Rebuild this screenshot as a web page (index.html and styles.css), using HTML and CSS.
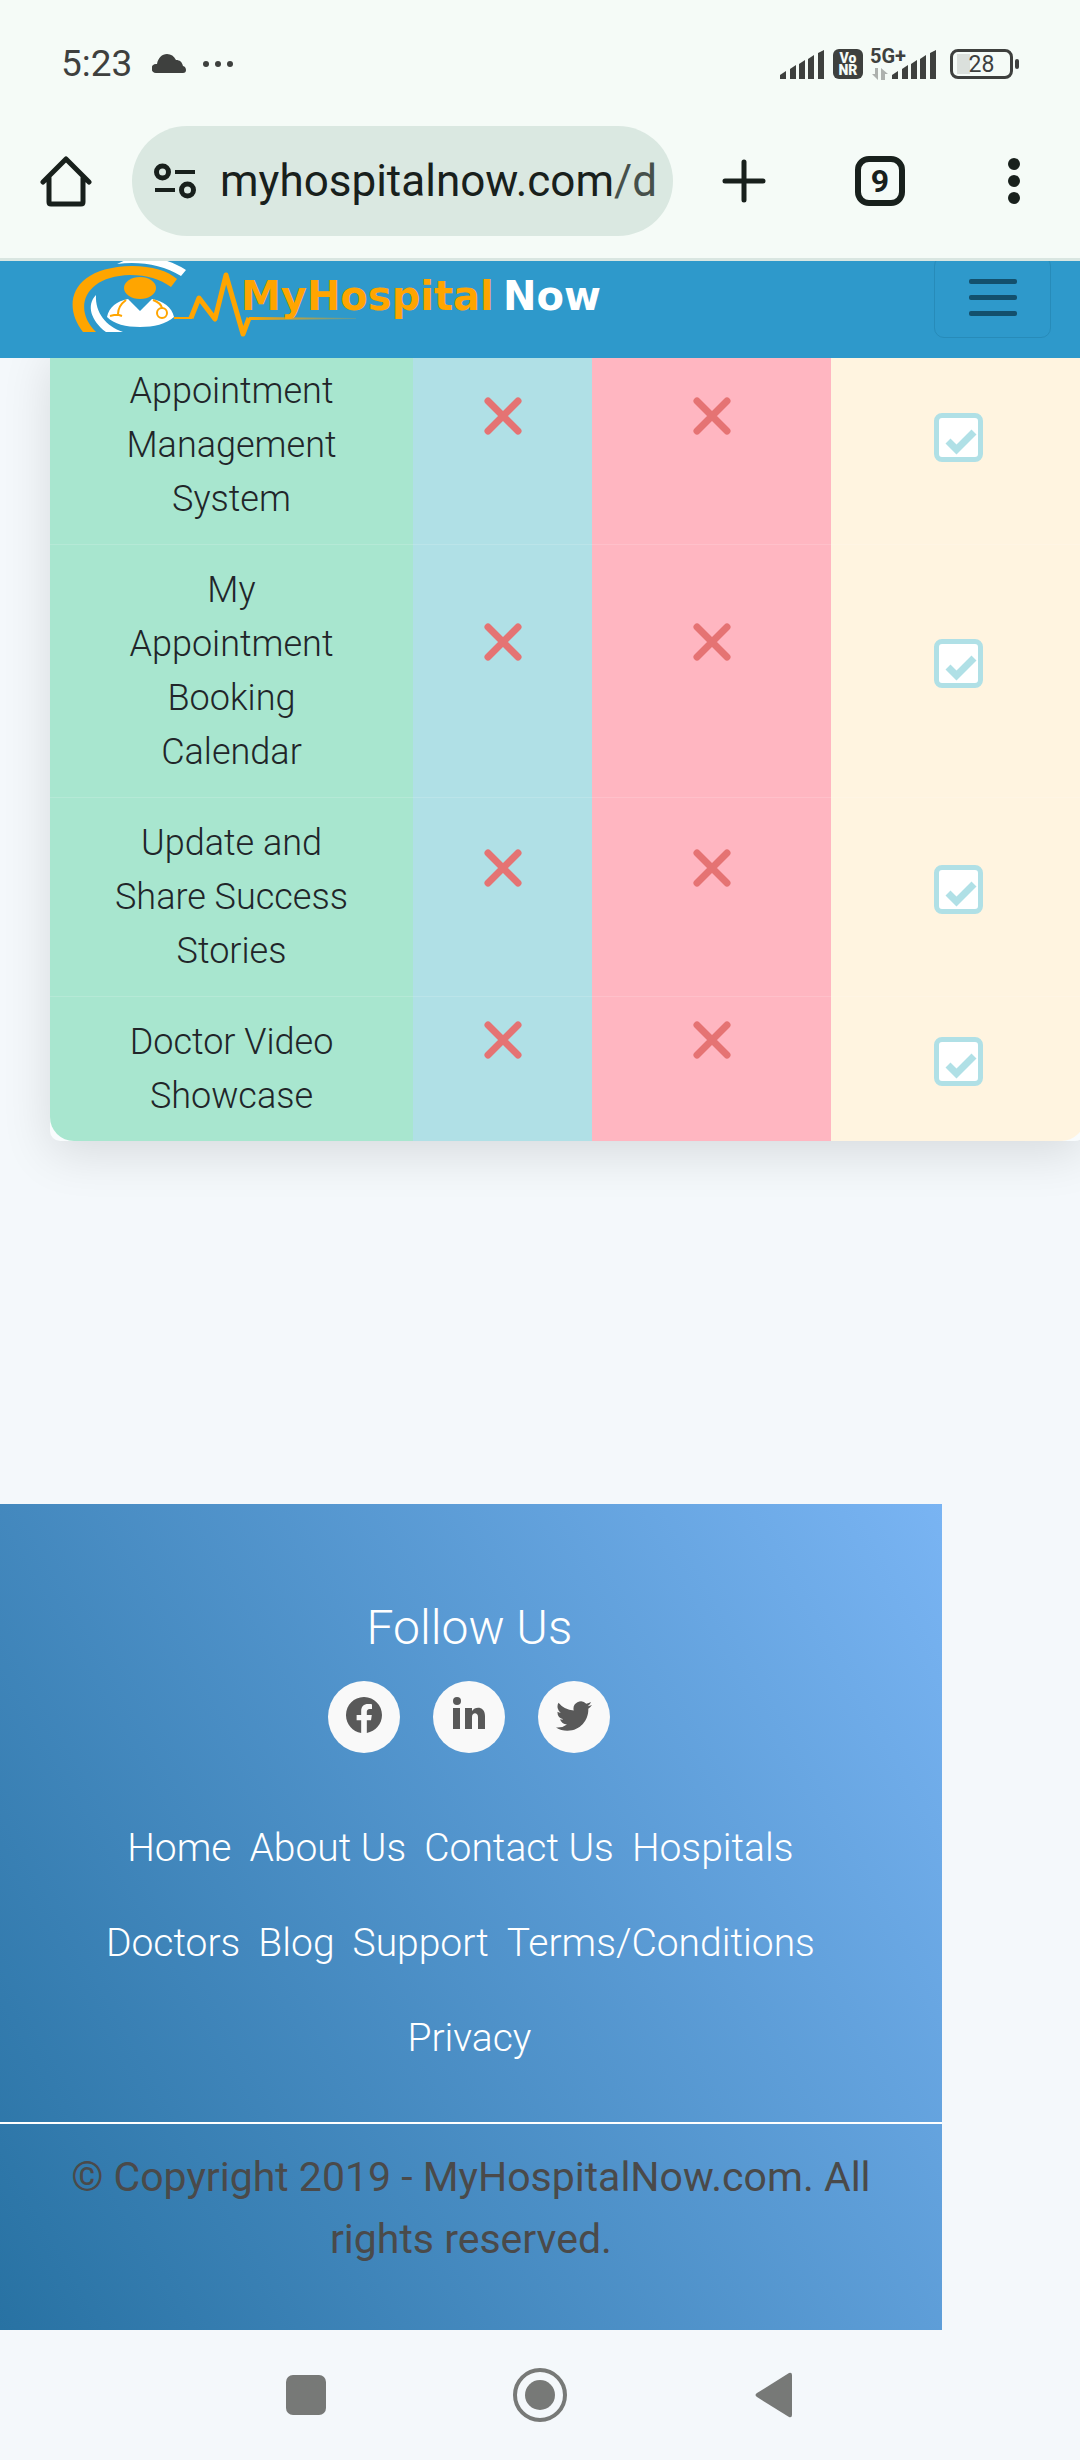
FILE: index.html
```html
<!DOCTYPE html>
<html lang="en">
<head>
  <meta charset="UTF-8">
  <meta name="viewport" content="width=device-width, initial-scale=1">
  <title>MyHospital Now</title>
  <link rel="stylesheet" href="styles.css">
</head>
<body>
  <header class="browser">
    <div class="status-bar">
      <span class="time">5:23</span>
      <svg class="cloud" width="34" height="20" viewBox="0 0 34 20"><path d="M4 19a4 4 0 0 1 0-9h1C6 4 10 0 15 0c4 0 7 2 9 6 4 0 6 2 7 6 4 1 4 7 0 7z" fill="#3e403e"/></svg>
      <svg width="32" height="8" viewBox="0 0 32 8" fill="#3e403e"><circle cx="4" cy="4" r="3"/><circle cx="16" cy="4" r="3"/><circle cx="28" cy="4" r="3"/></svg>

      <div class="status-right">
        <svg width="44" height="29" viewBox="0 0 44 29" fill="#3e403e"><path d="M0 29v-4l6-4v8zM10 29V19l6-4v14zM19 29V14l6-4v19zM28 29V9l6-4v24zM38 29V3l6-3v29z"/></svg>
        <div class="vonr"><span>Vo</span><span>NR</span></div>
        <div class="network">
          <span>5G+</span>
          <svg width="16" height="12" viewBox="0 0 16 12" fill="#adb1ae"><path d="M3 0h3v12L0 6h3zM10 12h-1V0l7 6h-3v6z"/></svg>
        </div>
        <svg class="signal-two" width="44" height="29" viewBox="0 0 44 29" fill="#3e403e"><path d="M0 29v-4l6-4v8zM10 29V19l6-4v14zM19 29V14l6-4v19zM28 29V9l6-4v24zM38 29V3l6-3v29z"/></svg>
        <div class="battery"><span>28</span></div>
      </div>
    </div>

    <div class="toolbar">
      <button class="home" aria-label="Home">
        <svg width="52" height="52" viewBox="0 0 52 52" fill="none" stroke="#18201c" stroke-width="5" stroke-linejoin="round" stroke-linecap="round"><path d="M3 27L26 4l23 23M9 22v25q0 2 2 2h30q2 0 2-2V22"/></svg>
      </button>
      <button class="address">
        <svg width="42" height="36" viewBox="0 0 42 36" fill="none" stroke="#18201c" stroke-width="5"><circle cx="8.500" cy="9" r="6"/><circle cx="33.500" cy="27" r="6"/><path d="M21 9h20M1 27h20" stroke-width="4"/></svg>
        <span class="url">myhospitalnow.com<span class="path">/d</span></span>
      </button>
      <button class="new-tab" aria-label="New tab">
        <svg width="44" height="44" viewBox="0 0 44 44" stroke="#18201c" stroke-width="5" stroke-linecap="round"><path d="M22 3v38M3 22h38"/></svg>
      </button>
      <button class="tabs" aria-label="Open tabs"><span>9</span></button>
      <button class="more" aria-label="More">
        <svg width="12" height="46" viewBox="0 0 12 46" fill="#18201c"><circle cx="6" cy="6" r="6"/><circle cx="6" cy="23" r="6"/><circle cx="6" cy="40" r="6"/></svg>
      </button>
    </div>
  </header>

  <nav class="navbar">
    <a href="#" class="logo" aria-label="MyHospital Now">
      <svg width="540" height="97" viewBox="71 261 540 97">
        <defs>
          <linearGradient id="fade" gradientUnits="userSpaceOnUse" x1="249" y1="0" x2="356" y2="0">
            <stop offset="0" stop-color="#ffa500"/>
            <stop offset="1" stop-color="#ffa500" stop-opacity="0.2"/>
          </linearGradient>
        </defs>
        <path d="M83 332C62 306 70 267 132 266c20 0 36 5 45 13l-6 8c-11-8-24-12-41-12-45 1-58 33-34 57z" fill="#ffa500"/>
        <path d="M117 264c23-3 46 1 64 12l5-6c-9-6-20-10-30-12h-26z" fill="#fff"/>
        <path d="M96 295c-10 10-5 26 10 37h17c-17-6-28-19-27-37z" fill="#fff"/>
        <path d="M107 317c2-10 10-16 21-18l12 12 12-12c11 2 20 8 22 18-8 7-20 10-34 10s-26-3-33-10z" fill="#fff"/>
        <ellipse cx="140" cy="288" rx="16" ry="11" fill="#ffa500"/>
        <g fill="none" stroke="#ffa500" stroke-width="2">
          <path d="M126 300q-8 6-8 14M110 316l4-1h5l3 1M153 300q8 3 9 8"/>
          <circle cx="162" cy="313" r="5"/>
          <path d="M174 318h18"/>
        </g>
        <path d="M191 318l8-20 16 21 11-44 17 59 6-16" fill="none" stroke="#ffa500" stroke-width="5" stroke-linejoin="round"/>
        <path d="M249 317l107 1v1l-107 1z" fill="url(#fade)"/>
        <text x="241" y="310" class="logo-text" fill="#ffa500">MyHospital</text>
        <text x="503" y="310" class="logo-text" fill="#fff">Now</text>
      </svg>
    </a>
    <button class="toggler" aria-label="Toggle navigation">
      <span></span><span></span><span></span>
    </button>
  </nav>

  <main>
    <div class="table-wrap">
      <table>
        <colgroup><col class="col-feature"><col class="col-free"><col class="col-basic"><col></colgroup>
        <tbody>
          <tr>
            <td>Appointment Management System</td>
            <td class="no"><svg viewBox="0 0 38 38"><path d="M4 4l30 30M34 4L4 34"/></svg></td>
            <td class="no"><svg viewBox="0 0 38 38"><path d="M4 4l30 30M34 4L4 34"/></svg></td>
            <td class="yes"><input type="checkbox" checked aria-label="Appointment Management System"></td>
          </tr>
          <tr>
            <td>My Appointment Booking Calendar</td>
            <td class="no"><svg viewBox="0 0 38 38"><path d="M4 4l30 30M34 4L4 34"/></svg></td>
            <td class="no"><svg viewBox="0 0 38 38"><path d="M4 4l30 30M34 4L4 34"/></svg></td>
            <td class="yes"><input type="checkbox" checked aria-label="My Appointment Booking Calendar"></td>
          </tr>
          <tr>
            <td>Update and Share Success Stories</td>
            <td class="no"><svg viewBox="0 0 38 38"><path d="M4 4l30 30M34 4L4 34"/></svg></td>
            <td class="no"><svg viewBox="0 0 38 38"><path d="M4 4l30 30M34 4L4 34"/></svg></td>
            <td class="yes"><input type="checkbox" checked aria-label="Update and Share Success Stories"></td>
          </tr>
          <tr>
            <td>Doctor Video Showcase</td>
            <td class="no"><svg viewBox="0 0 38 38"><path d="M4 4l30 30M34 4L4 34"/></svg></td>
            <td class="no"><svg viewBox="0 0 38 38"><path d="M4 4l30 30M34 4L4 34"/></svg></td>
            <td class="yes"><input type="checkbox" checked aria-label="Doctor Video Showcase"></td>
          </tr>
        </tbody>
      </table>
    </div>
  </main>

  <footer class="footer">
    <h2>Follow Us</h2>
    <div class="social">
      <a href="#" aria-label="Facebook">
        <svg width="36" height="36" viewBox="0 0 16 16"><path d="M16 8.049c0-4.446-3.582-8.050-8-8.050C3.580 0-.002 3.603-.002 8.050c0 4.017 2.926 7.347 6.750 7.951v-5.625h-2.030V8.050H6.750V6.275c0-2.017 1.195-3.131 3.022-3.131.876 0 1.791.157 1.791.157v1.980h-1.009c-.993 0-1.303.621-1.303 1.258v1.510h2.218l-.354 2.326H9.250V16c3.824-.604 6.750-3.934 6.750-7.951"/></svg>
      </a>
      <a href="#" aria-label="LinkedIn">
        <svg width="34" height="34" viewBox="0 0 34 34"><circle cx="5" cy="4" r="4"/><path d="M1 11h7v21H1zM13 11h7v3c3-5 13-5 13 5v13h-7V20c0-5-6-5-6 0v12h-7z"/></svg>
      </a>
      <a href="#" aria-label="Twitter">
        <svg width="36" height="36" viewBox="0 0 16 16"><path d="M5.026 15c6.038 0 9.341-5.003 9.341-9.334q.002-.211-.006-.422A6.700 6.700 0 0 0 16 3.542a6.700 6.700 0 0 1-1.889.518 3.300 3.300 0 0 0 1.447-1.817 6.500 6.500 0 0 1-2.087.793A3.286 3.286 0 0 0 7.875 6.030a9.320 9.320 0 0 1-6.767-3.429 3.290 3.290 0 0 0 1.018 4.382A3.300 3.300 0 0 1 .640 6.575v.045a3.290 3.290 0 0 0 2.632 3.218 3.200 3.200 0 0 1-.865.115 3 3 0 0 1-.614-.057 3.280 3.280 0 0 0 3.067 2.277A6.600 6.600 0 0 1 .780 13.580a6 6 0 0 1-.780-.045A9.340 9.340 0 0 0 5.026 15"/></svg>
      </a>
    </div>
    <ul class="footer-links">
      <li><a href="#">Home</a></li>
      <li><a href="#">About Us</a></li>
      <li><a href="#">Contact Us</a></li>
      <li><a href="#">Hospitals</a></li>
      <li><a href="#">Doctors</a></li>
      <li><a href="#">Blog</a></li>
      <li><a href="#">Support</a></li>
      <li><a href="#">Terms/Conditions</a></li>
      <li><a href="#">Privacy</a></li>
    </ul>
    <p class="copyright">&copy; Copyright 2019 - MyHospitalNow.com. All rights reserved.</p>
  </footer>

  <div class="system-nav">
    <button aria-label="Recent apps"><svg width="40" height="40"><rect width="40" height="40" rx="7" fill="#777977"/></svg></button>
    <button aria-label="Home screen"><svg width="54" height="54"><circle cx="27" cy="27" r="25" fill="none" stroke="#777977" stroke-width="4"/><circle cx="27" cy="27" r="15" fill="#777977"/></svg></button>
    <button aria-label="Back"><svg width="38" height="46"><path d="M2 21L34 1q3-1 3 2v40q0 3-3 2L2 25q-3-2 0-4z" fill="#777977"/></svg></button>
  </div>
</body>
</html>
```

FILE: styles.css
```css
* {
  box-sizing: border-box;
}

body {
  margin: 0;
  background-color: #f4f8fb;
  font-family: Roboto, "Liberation Sans", sans-serif;
  color: #212529;
}

button {
  padding: 0;
  border: none;
  background: none;
  font-family: inherit;
  cursor: pointer;
}

svg {
  display: block;
}

/* browser bar */
.browser {
  position: relative;
  z-index: 2;
  background-color: #f5fbf7;
  border-bottom: 3px solid #d9e6e1;
}

.status-bar {
  display: flex;
  align-items: center;
  height: 126px;
  padding: 44px 61px 42px;
  color: #3e403e;
}

.time {
  font-size: 37px;
  line-height: 40px;
}

.cloud {
  margin: 0 16px 0 20px;
}

.status-right {
  display: flex;
  align-items: center;
  margin-left: auto;
}

.vonr {
  width: 30px;
  height: 30px;
  margin: 0 7px 0 9px;
  padding-top: 3px;
  border-radius: 6px;
  background-color: #3e403e;
  color: #f5fbf7;
  font-size: 14px;
  font-weight: 900;
  line-height: 12px;
  text-align: center;
}

.vonr span {
  display: block;
}

.network {
  width: 22px;
  height: 32px;
  font-size: 20px;
  font-weight: 700;
  line-height: 16px;
  white-space: nowrap;
}

.network span {
  display: block;
}

.network svg {
  margin: 4px 0 0 2px;
}

.signal-two {
  margin-right: 14px;
}

.battery {
  position: relative;
  width: 63px;
  height: 30px;
  margin-right: 6px;
  border: 3px solid #3e403e;
  border-radius: 8px;
  font-size: 23px;
  line-height: 26px;
  text-align: center;
  background: linear-gradient(#dbe0dc, #dbe0dc) 4px 2px / 13px 20px no-repeat;
}

.battery::after {
  content: "";
  position: absolute;
  top: 7px;
  right: -9px;
  width: 4px;
  height: 10px;
  border-radius: 2px;
  background-color: #3e403e;
}

.toolbar {
  display: flex;
  align-items: center;
  padding-bottom: 22px;
}

.home {
  margin: 0 40px;
}

.address {
  display: flex;
  flex: 1;
  align-items: center;
  gap: 24px;
  height: 110px;
  padding: 0 10px 0 22px;
  border-radius: 55px;
  background-color: #dae8e1;
}

.url {
  color: #18201c;
  font-size: 44px;
  line-height: 54px;
}

.path {
  color: #46504b;
}

.new-tab,
.tabs,
.more {
  display: flex;
  align-items: center;
  justify-content: center;
  width: 136px;
  height: 110px;
}

.new-tab {
  margin-left: 3px;
}

.more {
  width: 132px;
}

.tabs span {
  width: 50px;
  height: 50px;
  border: 6px solid #18201c;
  border-radius: 14px;
  color: #18201c;
  font-size: 32px;
  font-weight: 700;
  line-height: 38px;
}

/* site navbar */
.navbar {
  position: relative;
  z-index: 1;
  display: flex;
  align-items: flex-start;
  justify-content: space-between;
  height: 97px;
  padding: 0 29px 0 71px;
  background-color: #2e99cb;
}

.logo-text {
  font-family: "DejaVu Sans", sans-serif;
  font-size: 40px;
  font-weight: 700;
}

.toggler {
  display: flex;
  flex-direction: column;
  align-items: center;
  justify-content: center;
  gap: 11px;
  width: 117px;
  height: 82px;
  margin-top: -5px;
  border: 1px solid #278bb9;
  border-radius: 10px;
}

.toggler span {
  width: 48px;
  height: 5px;
  border-radius: 2px;
  background-color: #13506d;
}

/* plan comparison */
main {
  overflow: clip;
  padding-bottom: 363px;
}

.table-wrap {
  margin: -12px -5px 0 50px;
  border-radius: 10px;
  background-color: #f9fcfd;
  box-shadow: 0 12px 50px rgba(0, 0, 0, 0.12);
}

table {
  width: 100%;
  table-layout: fixed;
  border-spacing: 0;
}

.col-feature {
  width: 363px;
}

.col-free {
  width: 179px;
}

.col-basic {
  width: 239px;
}

td {
  padding: 18px 55px;
  border-bottom: 1px solid rgba(255, 255, 255, 0.15);
  font-size: 36px;
  font-weight: 300;
  line-height: 54px;
  text-align: center;
  vertical-align: middle;
}

td:nth-child(1) {
  background-color: #a8e6cf;
}

td:nth-child(2) {
  background-color: #b0e0e6;
}

td:nth-child(3) {
  background-color: #ffb6c1;
}

td:nth-child(4) {
  background-color: #fff4e0;
}

tr:last-child td {
  border-bottom: none;
}

tr:last-child td:first-child {
  border-bottom-left-radius: 24px;
}

tr:last-child td:last-child {
  border-bottom-right-radius: 24px;
}

.no {
  padding-bottom: 76px;
}

.no svg {
  width: 38px;
  height: 38px;
  margin: 0 auto;
  fill: none;
  stroke: #e57373;
  stroke-width: 7;
  stroke-linecap: round;
}

.yes {
  padding-bottom: 34px;
}

.yes input {
  display: block;
  appearance: none;
  width: 49px;
  height: 49px;
  margin: 0 auto;
  border: 5px solid #b0e0e6;
  border-radius: 8px;
  background-color: #fff;
}

.yes input:checked::before {
  content: "";
  display: block;
  width: 39px;
  height: 39px;
  background-color: #b0e0e6;
  clip-path: polygon(7px 26px, 12px 21px, 18px 27px, 33px 12px, 38px 17px, 18px 37px);
}

/* footer */
.footer {
  width: 87.2%;
  padding: 96px 3px 60px 0;
  background: linear-gradient(60deg, #2872a3, #79b4f3);
  text-align: center;
}

.footer h2 {
  margin: 0 0 25px;
  color: #fff;
  font-size: 48px;
  font-weight: 300;
  line-height: 56px;
}

.social {
  display: flex;
  justify-content: center;
  gap: 33px;
}

.social a {
  display: flex;
  justify-content: center;
  width: 72px;
  height: 72px;
  padding-top: 16px;
  border-radius: 50%;
  background-color: #f9f9f9;
}

.social svg {
  fill: #595959;
}

.footer-links {
  display: flex;
  flex-wrap: wrap;
  justify-content: center;
  margin: 48px 0 36px;
  padding: 0 80px;
  list-style-type: none;
}

.footer-links li {
  margin-right: 18px;
}

.footer-links li:last-child {
  margin-right: 0;
}

.footer-links a {
  color: #fff;
  font-size: 39px;
  font-weight: 300;
  line-height: 95px;
  text-decoration: none;
}

.copyright {
  margin: 0 -3px 0 0;
  padding: 22px 60px 0;
  border-top: 2px solid #fff;
  color: #4a4a4a;
  font-size: 41px;
  line-height: 62px;
}

/* phone buttons */
.system-nav {
  display: flex;
  align-items: center;
  justify-content: center;
  height: 130px;
}

.system-nav button {
  display: flex;
  justify-content: center;
  width: 234px;
}
```
